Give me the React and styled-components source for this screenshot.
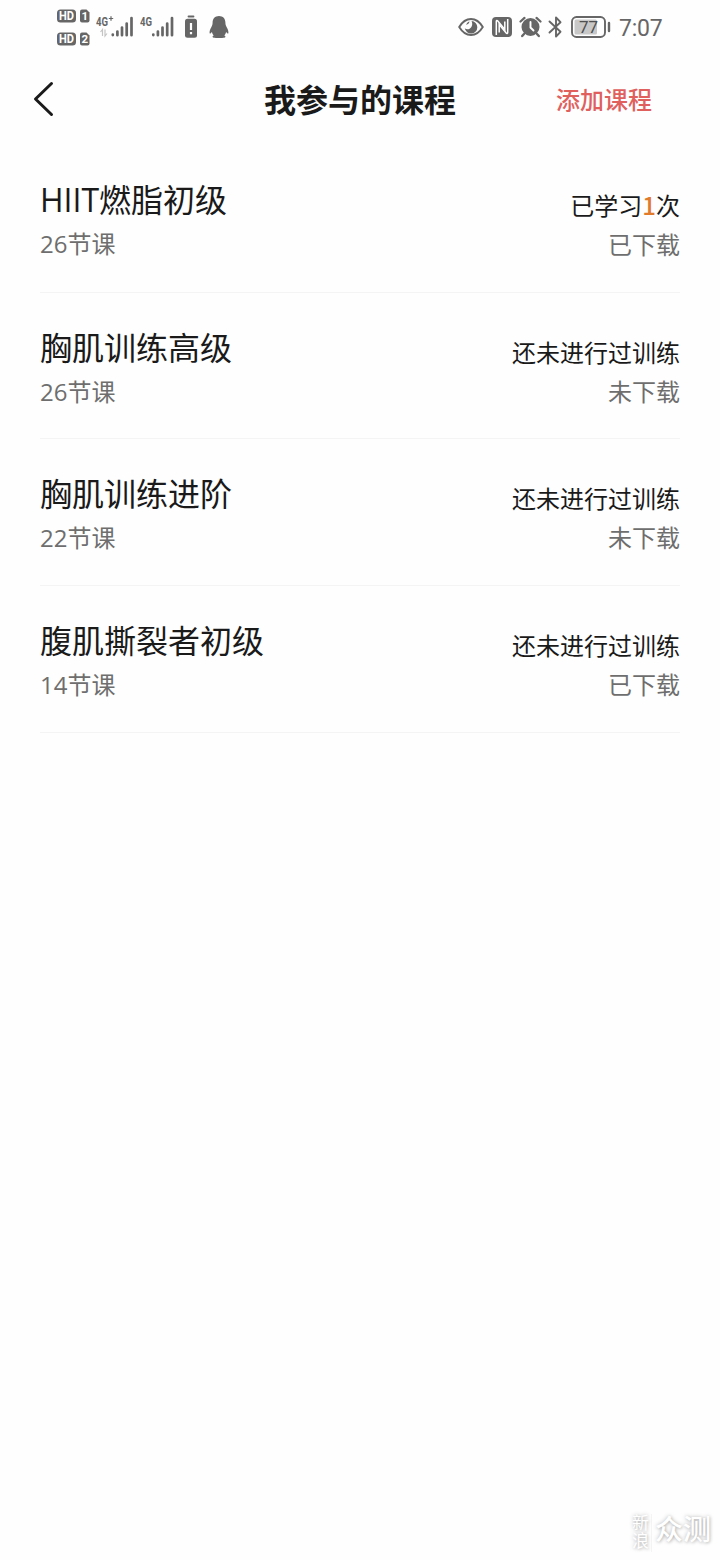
import styled, { createGlobalStyle } from "styled-components";

const INK = "#1a1a1a";
const GREY = "#6e6e6e";
const STATUS_GREY = "#666666";
const RED = "#e0605e";
const ORANGE = "#e27a2c";

const courses = [
  { name: "HIIT燃脂初级", lessons: 26, times: 1, downloaded: true },
  { name: "胸肌训练高级", lessons: 26, times: 0, downloaded: false },
  { name: "胸肌训练进阶", lessons: 22, times: 0, downloaded: false },
  { name: "腹肌撕裂者初级", lessons: 14, times: 0, downloaded: true },
];

const HdBadge = ({ sim }) => (
  <svg width="33" height="14" viewBox="0 0 33 14">
    <rect x="0" y="0.5" width="19" height="13" rx="3.5" fill={STATUS_GREY} />
    <SvgText x="9.5" y="11.2" $size={12} $weight={700} $fill="#fff" textLength="15" lengthAdjust="spacingAndGlyphs">
      HD
    </SvgText>
    <path d="M25 .5h4.500l3 3v8a2 2 0 0 1-2 2H25a2 2 0 0 1-2-2v-9a2 2 0 0 1 2-2z" fill={STATUS_GREY} />
    <SvgText x="27.7" y="11.2" $size={11.5} $weight={700} $fill="#fff">
      {sim}
    </SvgText>
  </svg>
);

const Signal = ({ arrows }) => (
  <svg width="38" height="26" viewBox="0 0 38 26">
    <SvgText x="0" y="11.5" $size={13.5} $weight={700} $fill={STATUS_GREY} $anchor="start" textLength="12" lengthAdjust="spacingAndGlyphs">
      4G
    </SvgText>
    {arrows && (
      <>
        <path d="M12.800 4.500h4.400M15 2.300v4.400" stroke={STATUS_GREY} strokeWidth="1.200" />
        <path d="M6.500 22v-6.500l-2 2.500M9 15.500V22l2-2.500" stroke="#c4c4c4" strokeWidth="1.200" fill="none" />
      </>
    )}
    <path
      d={
        arrows
          ? "M16.800 20.500v.6M21.400 17.500v3.700M26 13.500v7.700M30.700 9.500v11.700M35.500 4v17.200"
          : "M13.300 20.500v.6M17.900 17.500v3.700M22.500 13.500v7.700M27.200 9.500v11.700M32 4v17.200"
      }
      stroke={STATUS_GREY}
      strokeWidth="2.700"
      strokeLinecap="round"
    />
  </svg>
);

const BatteryAlert = () => (
  <svg width="14" height="24" viewBox="0 0 14 24">
    <path d="M4.500 1.500h5" stroke={STATUS_GREY} strokeWidth="1.800" strokeLinecap="round" />
    <rect x="1" y="3.800" width="12" height="19" rx="2.500" fill={STATUS_GREY} />
    <path d="M7 8v7M7 17v2.200" stroke="#fff" strokeWidth="2.200" />
  </svg>
);

const Penguin = () => (
  <svg width="20" height="24" viewBox="0 0 20 24">
    <path
      d="M10 1C6 1 3.600 3.800 3.600 7.500c0 2-.4 3.200-1.300 4.700C1.100 14.300.4 16.500.6 18c.2 1 1.400.4 2.300-1 .3 1.400.9 2.600 1.800 3.500-1.500.5-1.700 2 0 2.200 1.800.3 8.800.3 10.600 0 1.700-.2 1.500-1.700 0-2.200.9-.9 1.500-2.100 1.800-3.500.9 1.400 2.100 2 2.300 1 .2-1.500-.5-3.700-1.700-5.800-.9-1.500-1.300-2.700-1.300-4.700C16.400 3.800 14 1 10 1z"
      fill={STATUS_GREY}
    />
  </svg>
);

const Eye = () => (
  <svg width="26" height="20" viewBox="0 0 26 20">
    <path d="M1.200 10C4.500 4.500 8.500 2 13 2s8.500 2.500 11.800 8c-3.300 5.500-7.300 8-11.800 8S4.500 15.500 1.200 10z" fill="none" stroke={STATUS_GREY} strokeWidth="1.900" />
    <path d="M13.500 4a6.300 6.300 0 1 1-6.700 7.300c1.200 1.200 3.300 1.300 4.800.4 2.700-1.500 3.300-4.900 1.900-7.700z" fill={STATUS_GREY} />
    <path d="M8 7.700A6 6 0 0 1 11.300 4.200c.3 1.700-1 3.300-3.300 3.500z" fill={STATUS_GREY} />
  </svg>
);

const Nfc = () => (
  <svg width="20" height="20" viewBox="0 0 20 20">
    <rect width="20" height="20" rx="4" fill={STATUS_GREY} />
    <path d="M4.300 18V4.500c0-1 .8-1.300 1.500-.5l7 8.500V4.500" fill="none" stroke="#fff" strokeWidth="1.500" />
    <path d="M15.700 2v13.500c0 1-.8 1.300-1.500.5l-7-8.500v8" fill="none" stroke="#fff" strokeWidth="1.500" />
  </svg>
);

const Alarm = () => (
  <svg width="23" height="22" viewBox="0 0 23 22">
    <circle cx="11.500" cy="11" r="9" fill={STATUS_GREY} />
    <path d="M1.500 5.500l4-3.600M21.500 5.500l-4-3.600" stroke={STATUS_GREY} strokeWidth="2.200" strokeLinecap="round" />
    <path d="M5 18l-1.800 2M18 18l1.800 2" stroke={STATUS_GREY} strokeWidth="2.400" strokeLinecap="round" />
    <path d="M11.500 6v5.500l3 3" fill="none" stroke="#fff" strokeWidth="1.900" strokeLinecap="round" />
  </svg>
);

const Bluetooth = () => (
  <svg width="15" height="24" viewBox="0 0 15 24">
    <path d="M1.500 6.500l11 10.300L8 21.500v-19l4.500 4.700-11 10.300" fill="none" stroke={STATUS_GREY} strokeWidth="1.900" strokeLinejoin="round" strokeLinecap="round" />
  </svg>
);

const Battery = () => (
  <svg width="40" height="22" viewBox="0 0 40 22">
    <rect x="1" y="1" width="33" height="20" rx="4.500" fill="none" stroke={STATUS_GREY} strokeWidth="1.900" />
    <rect x="3.500" y="3.500" width="22.500" height="15" rx="1.500" fill="#c8c8c8" />
    <SvgText x="17.500" y="17" $size={17} $fill="#505050">
      77
    </SvgText>
    <path d="M38 7v8" stroke={STATUS_GREY} strokeWidth="2.400" strokeLinecap="round" />
  </svg>
);

const CourseItem = ({ course }) => (
  <Row>
    <Column>
      <CourseName>{course.name}</CourseName>
      <Lessons>{course.lessons}节课</Lessons>
    </Column>
    <Column $end>
      {course.times > 0 ? (
        <Progress>
          已学习<Times>{course.times}</Times>次
        </Progress>
      ) : (
        <Progress>还未进行过训练</Progress>
      )}
      <Download>{course.downloaded ? "已下载" : "未下载"}</Download>
    </Column>
  </Row>
);

const App = () => {
  return (
    <Screen>
      <GlobalStyle />
      <StatusBar>
        <StatusGroup>
          <HdStack>
            <HdBadge sim="1" />
            <HdBadge sim="2" />
          </HdStack>
          <Slot $gap={6}>
            <Signal arrows />
          </Slot>
          <Slot $gap={6}>
            <Signal />
          </Slot>
          <Slot $gap={6}>
            <BatteryAlert />
          </Slot>
          <Slot $gap={11}>
            <Penguin />
          </Slot>
        </StatusGroup>
        <StatusGroup>
          <Eye />
          <Slot $gap={8}>
            <Nfc />
          </Slot>
          <Slot $gap={7}>
            <Alarm />
          </Slot>
          <Slot $gap={6}>
            <Bluetooth />
          </Slot>
          <Slot $gap={8}>
            <Battery />
          </Slot>
          <Clock>7:07</Clock>
        </StatusGroup>
      </StatusBar>

      <NavBar>
        <BackButton aria-label="返回">
          <svg width="22" height="36" viewBox="0 0 22 36">
            <path d="M18.500 2.500L2.500 18l16 15.500" fill="none" stroke={INK} strokeWidth="3" strokeLinecap="round" strokeLinejoin="round" />
          </svg>
        </BackButton>
        <PageTitle>我参与的课程</PageTitle>
        <AddButton>添加课程</AddButton>
      </NavBar>

      <CourseList>
        {courses.map((course) => (
          <CourseItem key={course.name} course={course} />
        ))}
      </CourseList>

      <Watermark>
        <WatermarkSide>新浪</WatermarkSide>
        <WatermarkName>众测</WatermarkName>
      </Watermark>
    </Screen>
  );
};

export default App;

//Styled Components

const GlobalStyle = createGlobalStyle`
  * {
    box-sizing: border-box;
  }

  body {
    margin: 0;
    background-color: #fefefe;
    font-family: "Open Sans", "Noto Sans CJK SC", sans-serif;
  }

  svg {
    display: block;
  }
`;

const SvgText = styled.text`
  font-family: Roboto, sans-serif;
  font-size: ${(props) => props.$size}px;
  font-weight: ${(props) => props.$weight || 400};
  fill: ${(props) => props.$fill};
  text-anchor: ${(props) => props.$anchor || "middle"};
`;

const Screen = styled.div`
  width: 720px;
  height: 1560px;
  overflow: hidden;

  display: flex;
  flex-direction: column;
`;

const StatusBar = styled.div`
  height: 54px;
  padding: 0 57px 0 57px;

  display: flex;
  justify-content: space-between;
  align-items: center;
`;

const StatusGroup = styled.div`
  display: flex;
  align-items: center;
`;

const HdStack = styled.div`
  display: flex;
  flex-direction: column;
  gap: 9px;
`;

const Slot = styled.div`
  margin-left: ${(props) => props.$gap}px;
`;

const Clock = styled.span`
  width: 44px;
  padding-top: 3px;
  margin-left: 8px;

  color: ${STATUS_GREY};

  font-family: Roboto, sans-serif;
  font-size: 23px;
  line-height: 30px;
  letter-spacing: -0.2px;
`;

const NavBar = styled.div`
  height: 92px;
  padding: 0 68px 0 33px;

  display: grid;
  grid-template-columns: 96px 1fr 96px;
  align-items: center;
`;

const BackButton = styled.button`
  padding: 0;
  margin-bottom: 2px;

  background: none;
  border: none;
`;

const PageTitle = styled.h1`
  margin: 0 0 0 35px;

  color: ${INK};

  font-size: 32px;
  font-weight: 700;
  line-height: 44px;
  text-align: center;
`;

const AddButton = styled.button`
  padding: 0;

  background: none;
  border: none;

  color: ${RED};

  font-family: inherit;
  font-size: 24px;
  font-weight: 500;
  line-height: 34px;
  white-space: nowrap;
`;

const CourseList = styled.div`
  padding: 0 40px;
`;

const Column = styled.div`
  padding-top: ${(props) => (props.$end ? 8 : 0)}px;

  display: flex;
  flex-direction: column;
  align-items: ${(props) => (props.$end ? "flex-end" : "flex-start")};
`;

const Row = styled.div`
  height: 146.7px;
  padding-top: 32px;
  border-bottom: 1px solid #f4f4f4;

  display: flex;
  justify-content: space-between;

  &:first-child ${Column}:first-child {
    margin-top: -1px;
  }
`;

const CourseName = styled.div`
  color: ${INK};

  font-size: 32px;
  line-height: 46px;
`;

const Lessons = styled.div`
  margin-top: 3px;

  color: ${GREY};

  font-size: 24px;
  line-height: 36px;
`;

const Progress = styled.div`
  color: ${INK};

  font-size: 24px;
  line-height: 39px;
`;

const Times = styled.span`
  color: ${ORANGE};

  font-family: "Noto Sans CJK SC", sans-serif;
  font-weight: 500;
  line-height: 1;
`;

const Download = styled.div`
  color: ${GREY};

  font-size: 24px;
  line-height: 39px;
`;

const Watermark = styled.div`
  margin: auto 9px 8px auto;

  display: flex;
  align-items: flex-start;

  color: #ffffff;
  text-shadow: 0 0 4px rgba(0, 0, 0, 0.25), 1px 1px 3px rgba(0, 0, 0, 0.15);
`;

const WatermarkSide = styled.div`
  height: 38px;
  padding-right: 3px;
  border-right: 1px solid #f4f4f4;

  font-size: 17px;
  line-height: 17px;
  letter-spacing: 1.5px;
  writing-mode: vertical-rl;
`;

const WatermarkName = styled.div`
  margin-left: 3px;

  font-size: 28px;
  font-weight: 500;
  line-height: 30px;
`;
